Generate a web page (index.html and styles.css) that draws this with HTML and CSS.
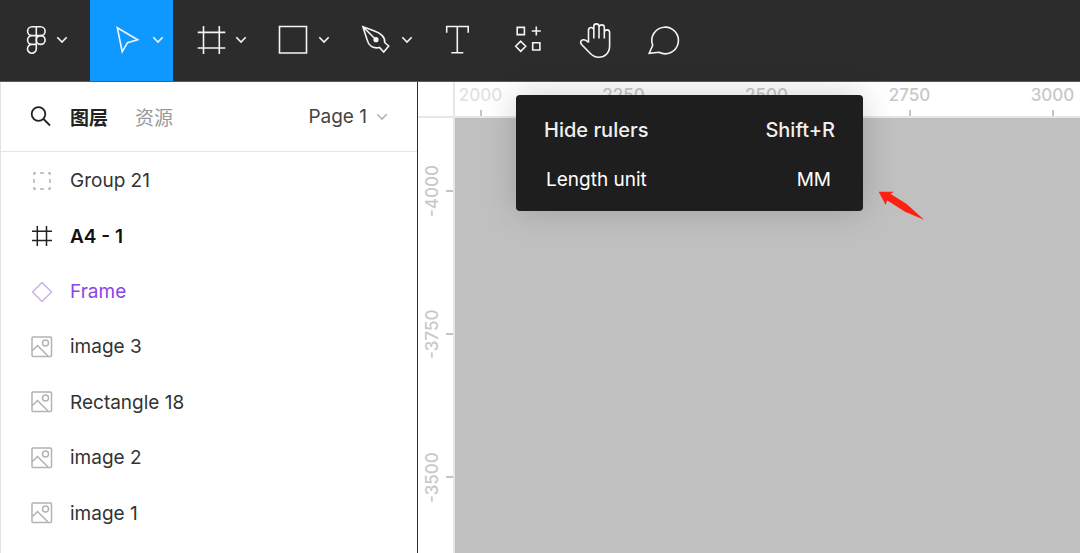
FILE: index.html
```html
<!DOCTYPE html>
<html lang="en">
<head>
<meta charset="utf-8">
<title>Design editor</title>
<link rel="stylesheet" href="styles.css">
</head>
<body>
<svg class="defs" aria-hidden="true">
  <symbol id="chevron" viewBox="0 0 12 32"><path d="M1.3 13.2 6 18l4.7-4.8"/></symbol>
  <symbol id="image" viewBox="0 0 22 22"><rect x="1" y="1" width="19.5" height="19.5" rx="1"/><circle cx="14.5" cy="7" r="3"/><path d="m1.5 14.5 5-5 10.500 10.500"/></symbol>
</svg>
<div class="app">
  <header class="toolbar">
    <button class="tool tool-logo" aria-label="Main menu">
      <svg class="icon" viewBox="0 0 32 32"><path d="M16.300 2.800H12a4.400 4.400 0 0 0 0 8.800h4.300zM16.300 2.800h4.400a4.400 4.400 0 0 1 0 8.800h-4.400zM16.300 11.600H12a4.400 4.400 0 0 0 0 8.800h4.300zM16.300 20.400H12a4.400 4.400 0 1 0 4.300 4.400z"/><circle cx="20.700" cy="16" r="4.400"/></svg>
      <svg class="chevron"><use href="#chevron"/></svg>
    </button>
    <button class="tool active" aria-label="Move">
      <svg class="icon" viewBox="0 0 32 32"><path d="m6.300 3.700 20.400 12-10.200 3-5.300 9z"/></svg>
      <svg class="chevron"><use href="#chevron"/></svg>
    </button>
    <button class="tool" aria-label="Frame">
      <svg class="icon" viewBox="0 0 32 32"><path d="M9.500 2v28M25.300 2v28M3.700 8.400h27.600M3.700 24h27.600"/></svg>
      <svg class="chevron"><use href="#chevron"/></svg>
    </button>
    <button class="tool" aria-label="Rectangle">
      <svg class="icon" viewBox="0 0 32 32"><path d="M2.500 2.500h27v26.500h-27z"/></svg>
      <svg class="chevron"><use href="#chevron"/></svg>
    </button>
    <button class="tool" aria-label="Pen">
      <svg class="icon" viewBox="0 0 32 32"><path d="M2.900 2.700 14.500 6.900C20 8.800 25.500 13 24.700 18.500L28.700 22l-5 6-4.200-4.500C13 25 8.500 21.500 7 15.500zL16 15.700"/><circle class="solid" cx="16" cy="15.700" r="1.800"/></svg>
      <svg class="chevron"><use href="#chevron"/></svg>
    </button>
    <button class="tool tool-single" aria-label="Text">
      <svg class="icon" viewBox="0 0 32 32"><path d="M5.700 8.700V2.500h21.500v6.200M16.300 2.500v26.300M10.300 28.800h12"/></svg>
    </button>
    <button class="tool tool-single" aria-label="Components">
      <svg class="icon" viewBox="0 0 32 32"><path d="M6.200 3.400h7.200v7.200H6.200zM21.700 18.800h7.200V26h-7.200zM25.300 2.500v9M20.800 7h9M9.700 17.200l5 5.100-5 5.100-5-5.100z"/></svg>
    </button>
    <button class="tool tool-single" aria-label="Hand">
      <svg class="icon" viewBox="0 0 32 32"><path d="M7.500 18.500V5.700a2.700 2.700 0 0 1 5.300 0V2.500a2.600 2.600 0 0 1 5.200 0v1a2.600 2.600 0 0 1 5.300 0v5a2.600 2.600 0 0 1 5.300 0V22c0 7-4.600 11.200-11 11.200-4 0-6-1.400-8.500-4L.6 20.500c-2.400-3 .4-5.500 3.400-4.500 1.500.5 2.500 1.500 3.500 2.500M12.800 5.500v9M18 3v11.500M23.300 7.500v7"/></svg>
    </button>
    <button class="tool tool-single" aria-label="Comment">
      <svg class="icon" viewBox="0 0 32 32"><path d="M1.700 21.300A13.300 13.300 0 1 1 8 28.300L-1.800 29.300z"/></svg>
    </button>
  </header>

  <div class="workspace">
    <aside class="sidebar">
      <div class="panel-head">
        <button class="search" aria-label="Search"><svg class="search-icon" viewBox="0 0 22 22"><circle cx="8.500" cy="8" r="6.800"/><path d="m13.500 13 6.500 6.500"/></svg></button>
        <button class="tab selected" lang="zh">图层</button>
        <button class="tab" lang="zh">资源</button>
        <button class="page-picker">Page 1 <svg class="chevron"><use href="#chevron"/></svg></button>
      </div>
      <ul class="layers">
        <li class="layer"><svg class="layer-icon" viewBox="0 0 22 22"><path d="M3 5V3h2M9 3h4M17 3h2v2M19 9v4M19 17v2h-2M13 19H9M5 19H3v-2M3 13V9"/></svg>Group 21</li>
        <li class="layer frame"><svg class="layer-icon" viewBox="0 0 22 22"><path d="M6.300 1v20M15.500 1v20M1 6.300h20M1 15.500h20"/></svg>A4 - 1</li>
        <li class="layer component"><svg class="layer-icon" viewBox="0 0 22 22"><path d="m11 1.500 9.500 9.500-9.500 9.500L1.500 11z"/></svg>Frame</li>
        <li class="layer"><svg class="layer-icon"><use href="#image"/></svg>image 3</li>
        <li class="layer"><svg class="layer-icon"><use href="#image"/></svg>Rectangle 18</li>
        <li class="layer"><svg class="layer-icon"><use href="#image"/></svg>image 2</li>
        <li class="layer"><svg class="layer-icon"><use href="#image"/></svg>image 1</li>
      </ul>
    </aside>

    <main class="stage">
      <div class="corner"></div>
      <div class="ruler-x">
        <span class="mark faded">2000</span><span class="mark">2250</span><span class="mark">2500</span><span class="mark">2750</span><span class="mark">3000</span>
      </div>
      <div class="ruler-y">
        <span class="mark">-4000</span><span class="mark">-3750</span><span class="mark">-3500</span>
      </div>
      <div class="canvas"></div>
      <div class="menu" role="menu">
        <button class="menu-item strong" role="menuitem"><span>Hide rulers</span><span>Shift+R</span></button>
        <button class="menu-item" role="menuitem"><span>Length unit</span><span>MM</span></button>
      </div>
      <svg class="pointer" viewBox="0 0 48 32" aria-hidden="true"><path d="M.7 1.700h15.600l-4 2L28.700 14 46 29.700 27 21.700 9 10.300 7.700 15z"/></svg>
    </main>
  </div>
</div>
</body>
</html>
```
FILE: styles.css
```css
* {
  box-sizing: border-box;
}

body {
  margin: 0;
  font-family: Inter, "Noto Sans CJK SC", sans-serif;
  font-size: 19px;
  color: #333;
}

button {
  padding: 0;
  border: 0;
  background: none;
  color: inherit;
  font: inherit;
}

svg {
  flex: none;
  fill: none;
  overflow: visible;
}

.defs {
  position: absolute;
  width: 0;
  height: 0;
}

.app {
  display: flex;
  flex-direction: column;
  min-height: 100vh;
}

/* Toolbar */
.toolbar {
  display: flex;
  height: 82px;
  background: #2c2c2c;
  border-bottom: 1px solid #5c5c5c;
}

.tool {
  display: flex;
  align-items: flex-start;
  gap: 9px;
  width: 83px;
  padding: 24px 9px 0 21px;
  stroke: #f4f4f4;
  stroke-width: 1.6;
}

.tool-logo {
  gap: 4px;
  width: 90px;
  padding-left: 20px;
}

.tool-single {
  width: 70px;
  padding: 24px 19px 0;
}

.active {
  background: #0d99ff;
}

.icon {
  width: 32px;
  height: 32px;
}

.solid {
  fill: #f4f4f4;
}

.chevron {
  width: 12px;
  height: 32px;
}

/* Layers panel */
.workspace {
  display: flex;
  flex: 1;
}

.sidebar {
  width: 418px;
  border-left: 1px solid #e2e2e2;
  border-right: 1px solid #2c2c2c;
  background: #fff;
}

.panel-head {
  display: flex;
  align-items: center;
  height: 70px;
  padding: 0 29px;
  border-bottom: 1px solid #e5e5e5;
}

.search {
  width: 40px;
  height: 22px;
}

.search-icon {
  display: block;
  width: 22px;
  height: 22px;
  stroke: #222;
  stroke-width: 1.8;
}

.tab {
  margin-right: 27px;
  color: #999;
}

.selected {
  color: #222;
  font-weight: 700;
}

.page-picker {
  display: flex;
  align-items: center;
  gap: 9px;
  margin-left: auto;
  color: #444;
}

.page-picker .chevron {
  stroke: #b3b3b3;
  stroke-width: 1.6;
}

.layers {
  display: grid;
  grid-auto-rows: 1fr;
  height: 388px;
  margin: 1px 0 0;
  padding: 0;
  list-style: none;
}

.layer {
  display: flex;
  align-items: center;
  gap: 17px;
  padding-left: 30px;
}

.layer-icon {
  width: 22px;
  height: 22px;
  stroke: #b3b3b3;
  stroke-width: 1.5;
}

.frame {
  color: #111;
  font-weight: 600;
}

.frame .layer-icon {
  stroke: #222;
}

.component {
  color: #8a44e8;
}

.component .layer-icon {
  stroke: #c9b3e6;
}

/* Canvas and rulers */
.stage {
  position: relative;
  display: grid;
  flex: 1;
  grid-template-columns: 37px 1fr;
  grid-template-rows: 36px 1fr;
  min-width: 0;
  color: #c8c8c8;
  font-size: 17px;
  font-weight: 500;
  line-height: 20px;
}

.corner,
.ruler-x,
.ruler-y {
  background: #fff;
}

.corner,
.ruler-x {
  border-bottom: 2px solid #e6e6e6;
}

.corner,
.ruler-y {
  border-right: 2px solid #e6e6e6;
}

.ruler-x,
.ruler-y {
  display: flex;
  overflow: hidden;
}

.ruler-y {
  flex-direction: column;
  padding-top: 2px;
}

.mark {
  display: flex;
  flex: none;
  flex-direction: column;
  align-items: center;
}

.mark::after {
  content: "";
  background: #c4c4c4;
}

.ruler-x .mark {
  gap: 5px;
  width: 143px;
  padding-top: 3px;
}

.ruler-x .mark:first-child {
  margin-left: -46px;
}

.ruler-x .mark::after {
  width: 2px;
  height: 7px;
}

.ruler-y .mark {
  justify-content: flex-end;
  gap: 4px;
  height: 143px;
  writing-mode: vertical-rl;
  transform: rotate(180deg);
}

.ruler-y .mark::after {
  width: 7px;
  height: 2px;
}

.ruler-x .faded {
  color: #e2e2e2;
}

.canvas {
  background: #c0c0c0;
}

.menu {
  position: absolute;
  top: 13px;
  left: 98px;
  width: 347px;
  padding: 10px 28px 6px;
  border-radius: 4px;
  background: #1e1e1e;
  box-shadow: 0 0 32px rgba(0, 0, 0, 0.18);
  color: #fff;
  font-size: 19px;
  font-weight: 400;
}

.menu-item {
  display: flex;
  justify-content: space-between;
  align-items: center;
  width: 100%;
  height: 50px;
  padding: 0 4px 0 2px;
}

.strong {
  padding: 0;
  color: #f0f0f0;
  font-size: 20px;
  font-weight: 500;
}

.pointer {
  position: absolute;
  top: 108px;
  left: 460px;
  width: 48px;
  height: 32px;
  fill: #ff2010;
}
```
